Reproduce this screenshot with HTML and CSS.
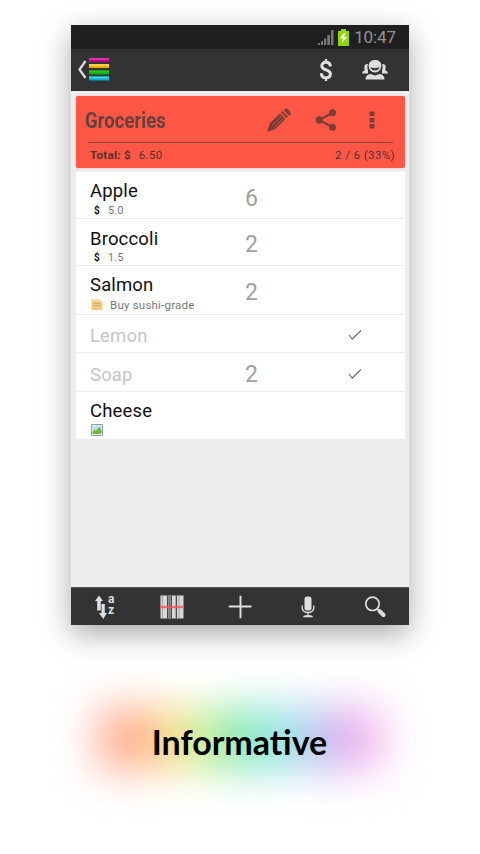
FILE: index.html
```html
<!DOCTYPE html>
<html lang="en">
<head>
<meta charset="utf-8">
<title>Groceries</title>
<link rel="stylesheet" href="styles.css">
</head>
<body>
<main class="phone">
  <div class="status">
    <svg class="signal" width="16" height="16" viewBox="0 0 16 16" fill="#777"><path d="M0 14h2v2H0zM3 12h2v4H3zM6 9.500h2.300V16H6zM9.300 6H12v10H9.300zM13 1h2.500v15H13z"/></svg>
    <svg class="battery" width="11" height="17" viewBox="0 0 11 17"><path d="M0 2h3V0h5v2h3v15H0z" fill="#93d500"/><path d="M6 4 2 9.500h3L4 14l5-6H6l1.500-4z" fill="#fff"/></svg>
    <span class="clock">10:47</span>
  </div>
  <header class="bar">
    <svg class="brand" width="34" height="26" viewBox="0 0 34 26">
      <path d="M8.500 4 2.500 12.500l6 8.500" fill="none" stroke="#dedede" stroke-width="2.200"/>
      <path d="M12 1h20v4H12z" fill="#b3087f"/><path d="M12 1h20v2H12z" fill="#dd30b0"/>
      <path d="M12 7h20v4H12z" fill="#f0a800"/><path d="M12 7h20v2H12z" fill="#ffd23a"/>
      <path d="M12 13.500h20v4H12z" fill="#0cae0c"/><path d="M12 13.500h20v2H12z" fill="#26c520"/>
      <path d="M12 19.500h20v4H12z" fill="#08a8c8"/><path d="M12 19.500h20v2H12z" fill="#3bd4ec"/>
    </svg>
    <svg class="dollar" width="14" height="24" viewBox="0 0 14 24" fill="none" stroke="#dedede"><path d="M11.300 8.500C11.300 5.800 9.800 4.300 7 4.300S2.800 5.800 2.800 7.900c0 4.900 8.600 3.200 8.600 8 0 2.500-1.700 3.900-4.400 3.900-3 0-4.600-1.700-4.600-4.600" stroke-width="3"/><path d="M7 1v3.500M7 19.500V23" stroke-width="2.300"/></svg>
    <svg class="people" width="28" height="22" viewBox="0 0 28 22" fill="#dedede">
      <path d="M3.500 9q-1-4 3.500-4V14.500H1q0-2.300 3-3.500-1-1-.5-2zM24.500 9q1-4-3.500-4V14.500h6q0-2.300-3-3.500 1-1 .5-2z"/>
      <ellipse cx="14" cy="8" rx="7.700" ry="7.500" fill="#333"/>
      <path d="M14 1c4.300 0 6.300 2.500 6.300 5.500 0 4-2.500 7-6.300 7s-6.300-3-6.300-7C7.700 3.500 9.700 1 14 1z"/>
      <path d="M9.500 8q1.500 1 4.500 1t4.500-1q-.5 3.500-4.500 3.500T9.500 8z" fill="#444"/>
      <path d="M4.500 20.500q0-5 5-5.500l4.500 1.500 4.500-1.500q5 .5 5 5.500z"/>
    </svg>
  </header>
  <section class="content">
    <div class="card">
      <div class="card-top">
        <h1 class="title"><span class="squeeze">Groceries</span></h1>
        <svg class="pencil" width="26" height="26" viewBox="0 0 26 26" fill="#7d3d35"><path d="m1 25 3-9L14 6.500l5.500 5.500L9.500 22zM15 5.500l1.500-1.500 5.500 5.500-1.500 1.500zM17.500 3q2.500-2 4-1l3 3q1 2-1 4z"/><path d="m6.500 18 9-9M9 20l8.500-8.500" stroke="#ff5a48" stroke-width=".6"/></svg>
        <svg class="share" width="22" height="22" viewBox="0 0 22 22" fill="#7d3d35"><path d="M17 4 4 11l13 7" fill="none" stroke="#7d3d35" stroke-width="2"/><circle cx="17.500" cy="3.700" r="3.500"/><circle cx="4.300" cy="11" r="3.700"/><circle cx="17.500" cy="18.300" r="3.500"/></svg>
        <svg class="more" width="6" height="18" viewBox="0 0 6 18" fill="#7d3d35"><path d="M.5.500h5v4.500h-5zM.5 7h5v4.500h-5zM.5 13h5v4.500h-5z"/></svg>
      </div>
      <div class="summary"><b>Total: $</b><span class="sum">6.50</span><span class="progress">2 / 6 (33%)</span></div>
    </div>
    <ul class="list">
      <li class="row r1"><div><div class="name">Apple</div><div class="sub"><b>$</b>5.0</div></div><span class="qty">6</span></li>
      <li class="row r2"><div><div class="name">Broccoli</div><div class="sub"><b>$</b>1.5</div></div><span class="qty">2</span></li>
      <li class="row r3"><div><div class="name">Salmon</div><div class="sub note"><svg width="12" height="12" viewBox="0 0 12 12"><path d="M.5 0h8.500l2.500 2.500V11H.5z" fill="#edcb82"/><path d="M1 0h8v2H1z" fill="#f6dfad"/><path d="M3 4.500h6M3 6.500h6" stroke="#d5ac5d"/><path d="M9 0v2.500h2.500" fill="#fff5dc"/></svg>Buy sushi-grade</div></div><span class="qty">2</span></li>
      <li class="row r4 done"><div class="name">Lemon</div><span class="qty"></span><svg class="check" width="14" height="12" viewBox="0 0 14 12"><path d="m1 6 3.200 4L13 1.500" fill="none" stroke="#707070" stroke-width="1.200"/></svg></li>
      <li class="row r5 done"><div class="name">Soap</div><span class="qty">2</span><svg class="check" width="14" height="12" viewBox="0 0 14 12"><path d="m1 6 3.200 4L13 1.500" fill="none" stroke="#707070" stroke-width="1.200"/></svg></li>
      <li class="row r6"><div><div class="name">Cheese</div><svg class="photo" width="12" height="12" viewBox="0 0 12 12"><path d="M.5.500h11v11H.5z" fill="#fff" stroke="#8ba0a5"/><path d="M1.500 1.500h9v7h-9z" fill="#b7e0f7"/><path d="m1.500 8 2-2.500L5 7l3-4 2.500 3v4h-9z" fill="#70bb35"/></svg></div></li>
    </ul>
  </section>
  <nav class="tools">
    <div class="sort">
      <svg width="12" height="26" viewBox="0 0 12 26" fill="#dedede"><path d="M4 1.500 8 7H5.800v9.500H2.200V7H0zM6.500 10h3.300v9H12l-3.800 6L4 19h2.500z"/></svg>
      <div class="az"><span>a</span><span>z</span></div>
    </div>
    <svg width="24" height="24" viewBox="0 0 24 24"><path d="M.5.500h23v23H.5z" fill="#d8d8d8"/><path d="M7.700.500v23M11.300.500v23M16.300.500v23" stroke="#3a3a3a" stroke-width="1.200"/><path d="M9.500.500v23" stroke="#777" stroke-width="2"/><path d="M2.500.500v23M19 .500v23" stroke="#999" stroke-width=".8"/><path d="M0 12h24" stroke="#ff5252" stroke-width="2.400" opacity=".8"/></svg>
    <svg width="24" height="24" viewBox="0 0 24 24"><path d="M12.500.700v22.600M.9 11.500h22.600" stroke="#e0e0e0" stroke-width="1.900"/></svg>
    <svg width="16" height="24" viewBox="0 0 16 24" fill="#dedede"><rect x="4.500" y="1.500" width="7" height="14" rx="2.500"/><path d="M2.200 10.500v3q1 4 5.800 4t5.800-4v-3M8 17v3" fill="none" stroke="#dedede" stroke-width="1.300"/><path d="M3 22.200q0-2.200 5-2.200t5 2.200z"/></svg>
    <svg width="24" height="24" viewBox="0 0 24 24" fill="none" stroke="#dedede"><circle cx="9.500" cy="8.800" r="6.700" stroke-width="1.700"/><path d="m14 13.500 2 2" stroke-width="1.600"/><path d="m16.500 16 4 4" stroke-width="4" stroke-linecap="round"/></svg>
  </nav>
</main>
<footer class="caption"><h2>Informative</h2></footer>
</body>
</html>
```
FILE: styles.css
```css
* { box-sizing: border-box; }
body {
  margin: 0;
  height: 854px;
  padding: 25px 71px 0;
  background: #fff;
  font-family: Roboto, "Liberation Sans", sans-serif;
  overflow: hidden;
}
svg { display: block; flex: none; }
.phone {
  display: flex;
  flex-direction: column;
  height: 600px;
  box-shadow: 0 9px 28px rgba(0, 0, 0, .34);
}
.status {
  display: flex;
  align-items: center;
  justify-content: flex-end;
  height: 24px;
  padding-right: 13px;
  background: #1f1f1f;
}
.signal { margin-right: 4px; }
.battery { margin-right: 5px; }
.clock { color: #929292; font-size: 17px; line-height: 24px; letter-spacing: -.1px; }
.bar {
  display: flex;
  align-items: center;
  height: 42px;
  padding: 0 20px 0 6px;
  background: #333;
}
.dollar { margin-left: auto; margin-right: 28px; }
.content {
  flex: 1;
  padding: 5px 4px 0 5px;
  background: #ededed;
}
.card {
  height: 72px;
  padding: 0 10px 0 9px;
  border-radius: 2px;
  background: #ff5746;
  box-shadow: 0 0 3px rgba(255, 87, 70, .3);
  color: #52322f;
}
.card-top { display: flex; align-items: center; height: 47px; }
.title { flex: none; width: 181px; margin: 0; font-size: 22px; line-height: 26px; color: #67413d; padding-top: 3px; }
.squeeze { display: inline-block; transform: scaleX(.845); transform-origin: left; }
.pencil { margin-right: 23px; }
.share { margin-right: 32px; }
.summary {
  display: flex;
  position: relative;
  height: 25px;
  padding-left: 5px;
  font-size: 11.500px;
  line-height: 25px;
  letter-spacing: .3px;
}
.summary::before {
  content: "";
  position: absolute;
  left: 3px;
  right: 2px;
  top: -1px;
  height: 1px;
  background: #923f35;
}
.sum { margin-left: 8px; }
.progress { margin-left: auto; letter-spacing: .4px; }
.list {
  margin: 4px 0 0;
  padding: 0;
  list-style: none;
  background: #fff;
}
.row {
  display: grid;
  grid-template-columns: 155px 104px 1fr;
  padding: 0 0 0 14px;
  border-bottom: 1px solid #ededed;
}
.name { font-size: 18.500px; line-height: 22px; letter-spacing: .15px; color: #101010; }
.sub { display: flex; align-items: center; font-size: 11px; line-height: 16px; letter-spacing: .1px; color: #777; }
.sub b { width: 14px; margin-left: 4px; font-size: 10px; color: #111; }
.note { font-size: 11.500px; letter-spacing: .22px; }
.note svg { margin: 0 7px 0 1px; }
.qty { font-size: 23px; color: #a0a0a0; line-height: 28px; }
.r1, .r2 { height: 47px; padding-top: 8px; }
.r1 .sub, .r2 .sub { padding-top: 1px; }
.r2 .name { padding-top: 1px; }
.r2 .sub { padding-top: 0; }
.r1 .qty, .r3 .qty { padding-top: 5px; }
.r2 .qty { padding-top: 4px; }
.r3 { height: 49px; padding-top: 8px; }
.r3 .sub { padding-top: 1px; }
.done { align-items: center; }
.done .name { color: #c5c5c5; }
.r4 { height: 38px; padding-top: 4px; }
.r5 { height: 39px; padding-top: 5px; }
.r6 { height: 47px; padding-top: 8px; border: 0; }
.check { margin-left: -1px; margin-bottom: 2px; }
.photo { margin: 2px 0 0 1px; }
.tools {
  display: grid;
  grid-template-columns: repeat(5, 1fr);
  place-items: center;
  height: 38px;
  background: #333;
  border-top: 1px solid #555;
}
.sort { display: flex; align-items: center; gap: 1px; }
.az {
  display: grid;
  grid-template-rows: 11px 11px;
  padding-bottom: 4px;
  color: #dedede;
  font: bold 12px/11px Roboto, sans-serif;
}
.caption {
  position: relative;
  display: flex;
  justify-content: center;
  margin: 84px 15px 0 14px;
}
.caption::before {
  content: "";
  position: absolute;
  left: 14px;
  right: 12px;
  top: 0;
  height: 60px;
  background: linear-gradient(90deg, #ff9c8b, #ffae86 15%, #f3ee88 30%, #b4f09a 40%, #78e3b0 50%, #92e9ec 65%, #b6c2f0 77%, #e7a4ec 88%, #f9b6ee);
  filter: blur(22px);
}
.caption h2 {
  position: relative;
  margin: 12px 0 0;
  font: bold 34px/42px Lato, sans-serif;
  color: #000;
}
```
